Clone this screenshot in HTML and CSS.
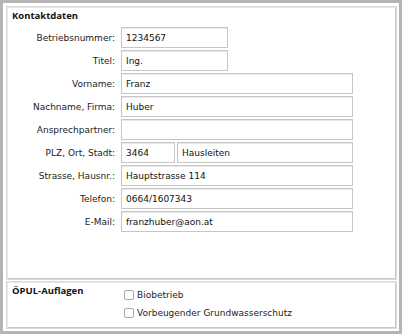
FILE: index.html
```html
<!DOCTYPE html>
<html>
	<head>
	<meta charset="utf-8">
	<link rel="stylesheet" href="styles.css">
	</head>

	<body>
		<div class="window">

			<div class="panel contact">
				<div class="panel-title">Kontaktdaten</div>

				<div class="rows">
					<div class="row">
						<label class="lbl">Betriebsnummer:</label>
						<input class="field short" value="1234567">
					</div>
					<div class="row">
						<label class="lbl">Titel:</label>
						<input class="field short" value="Ing.">
					</div>
					<div class="row">
						<label class="lbl">Vorname:</label>
						<input class="field wide" value="Franz">
					</div>
					<div class="row">
						<label class="lbl">Nachname, Firma:</label>
						<input class="field wide" value="Huber">
					</div>
					<div class="row">
						<label class="lbl">Ansprechpartner:</label>
						<input class="field wide" value="">
					</div>
					<div class="row">
						<label class="lbl">PLZ, Ort, Stadt:</label>
						<input class="field zip" value="3464">
						<input class="field city" value="Hausleiten">
					</div>
					<div class="row">
						<label class="lbl">Strasse, Hausnr.:</label>
						<input class="field wide" value="Hauptstrasse 114">
					</div>
					<div class="row">
						<label class="lbl">Telefon:</label>
						<input class="field wide" value="0664/1607343">
					</div>
					<div class="row">
						<label class="lbl">E-Mail:</label>
						<input class="field wide" value="franzhuber@aon.at">
					</div>
				</div>
			</div>

			<div class="panel options">
				<div class="panel-title side">ÖPUL-Auflagen</div>
				<div class="checks">
					<label class="check"><input type="checkbox" class="box"> Biobetrieb</label>
					<label class="check"><input type="checkbox" class="box"> Vorbeugender Grundwasserschutz</label>
				</div>
			</div>

		</div>
	</body>
</html>
```

FILE: styles.css
```css
body, html {
	margin: 0;
	padding: 0;
}

body {
	background: #fff;
	font-family: "DejaVu Sans", "Open Sans", sans-serif;
	font-size: 9px;
	color: #222;
	-webkit-font-smoothing: antialiased;
}

.window {
	width: 402px;
	height: 334px;
	box-sizing: border-box;
	border: 3px solid #b4b4b4;
	padding: 3px 2px 2px 3px;
	background: #fff;
}

.panel {
	box-sizing: border-box;
	border: 1px solid #dadada;
	box-shadow: inset 1px 1px 0 #e6e6e6, inset -1px -1px 0 #c9c9c9;
	padding: 2px 5px;
}

.contact {
	height: 274px;
	margin-bottom: 1px;
}

.options {
	height: 48px;
	display: flex;
}

.panel-title {
	font-family: "Open Sans", "DejaVu Sans", sans-serif;
	font-size: 9.5px;
	font-weight: 700;
	color: #111;
	line-height: 14px;
	height: 14px;
}

.side {
	width: 109px;
	flex: none;
}

.rows {
	margin-top: 4px;
	display: flex;
	flex-direction: column;
	gap: 2px;
}

.row {
	display: flex;
	align-items: center;
	height: 21px;
}

.lbl {
	width: 103px;
	margin-right: 6px;
	text-align: right;
	white-space: nowrap;
}

.field {
	box-sizing: border-box;
	height: 21px;
	margin: 0;
	padding: 0 4px;
	border: 1px solid #c6c6c6;
	box-shadow: inset 0 1px 0 #e9e9e9;
	border-radius: 0;
	background: #fff;
	font-family: inherit;
	font-size: 9px;
	color: #111;
	outline: none;
}

.short { width: 107px; }
.wide { width: 232px; }
.zip { width: 54px; margin-right: 2px; }
.city { width: 176px; }

.checks {
	margin-top: 4px;
	display: flex;
	flex-direction: column;
	gap: 4px;
}

.check {
	display: flex;
	align-items: center;
	height: 14px;
	gap: 3px;
	padding-left: 3px;
}

.box {
	-webkit-appearance: none;
	appearance: none;
	width: 10px;
	height: 10px;
	margin: 0;
	box-sizing: border-box;
	border: 1px solid #a9a9a9;
	border-radius: 2px;
	background: #fff;
}
```
